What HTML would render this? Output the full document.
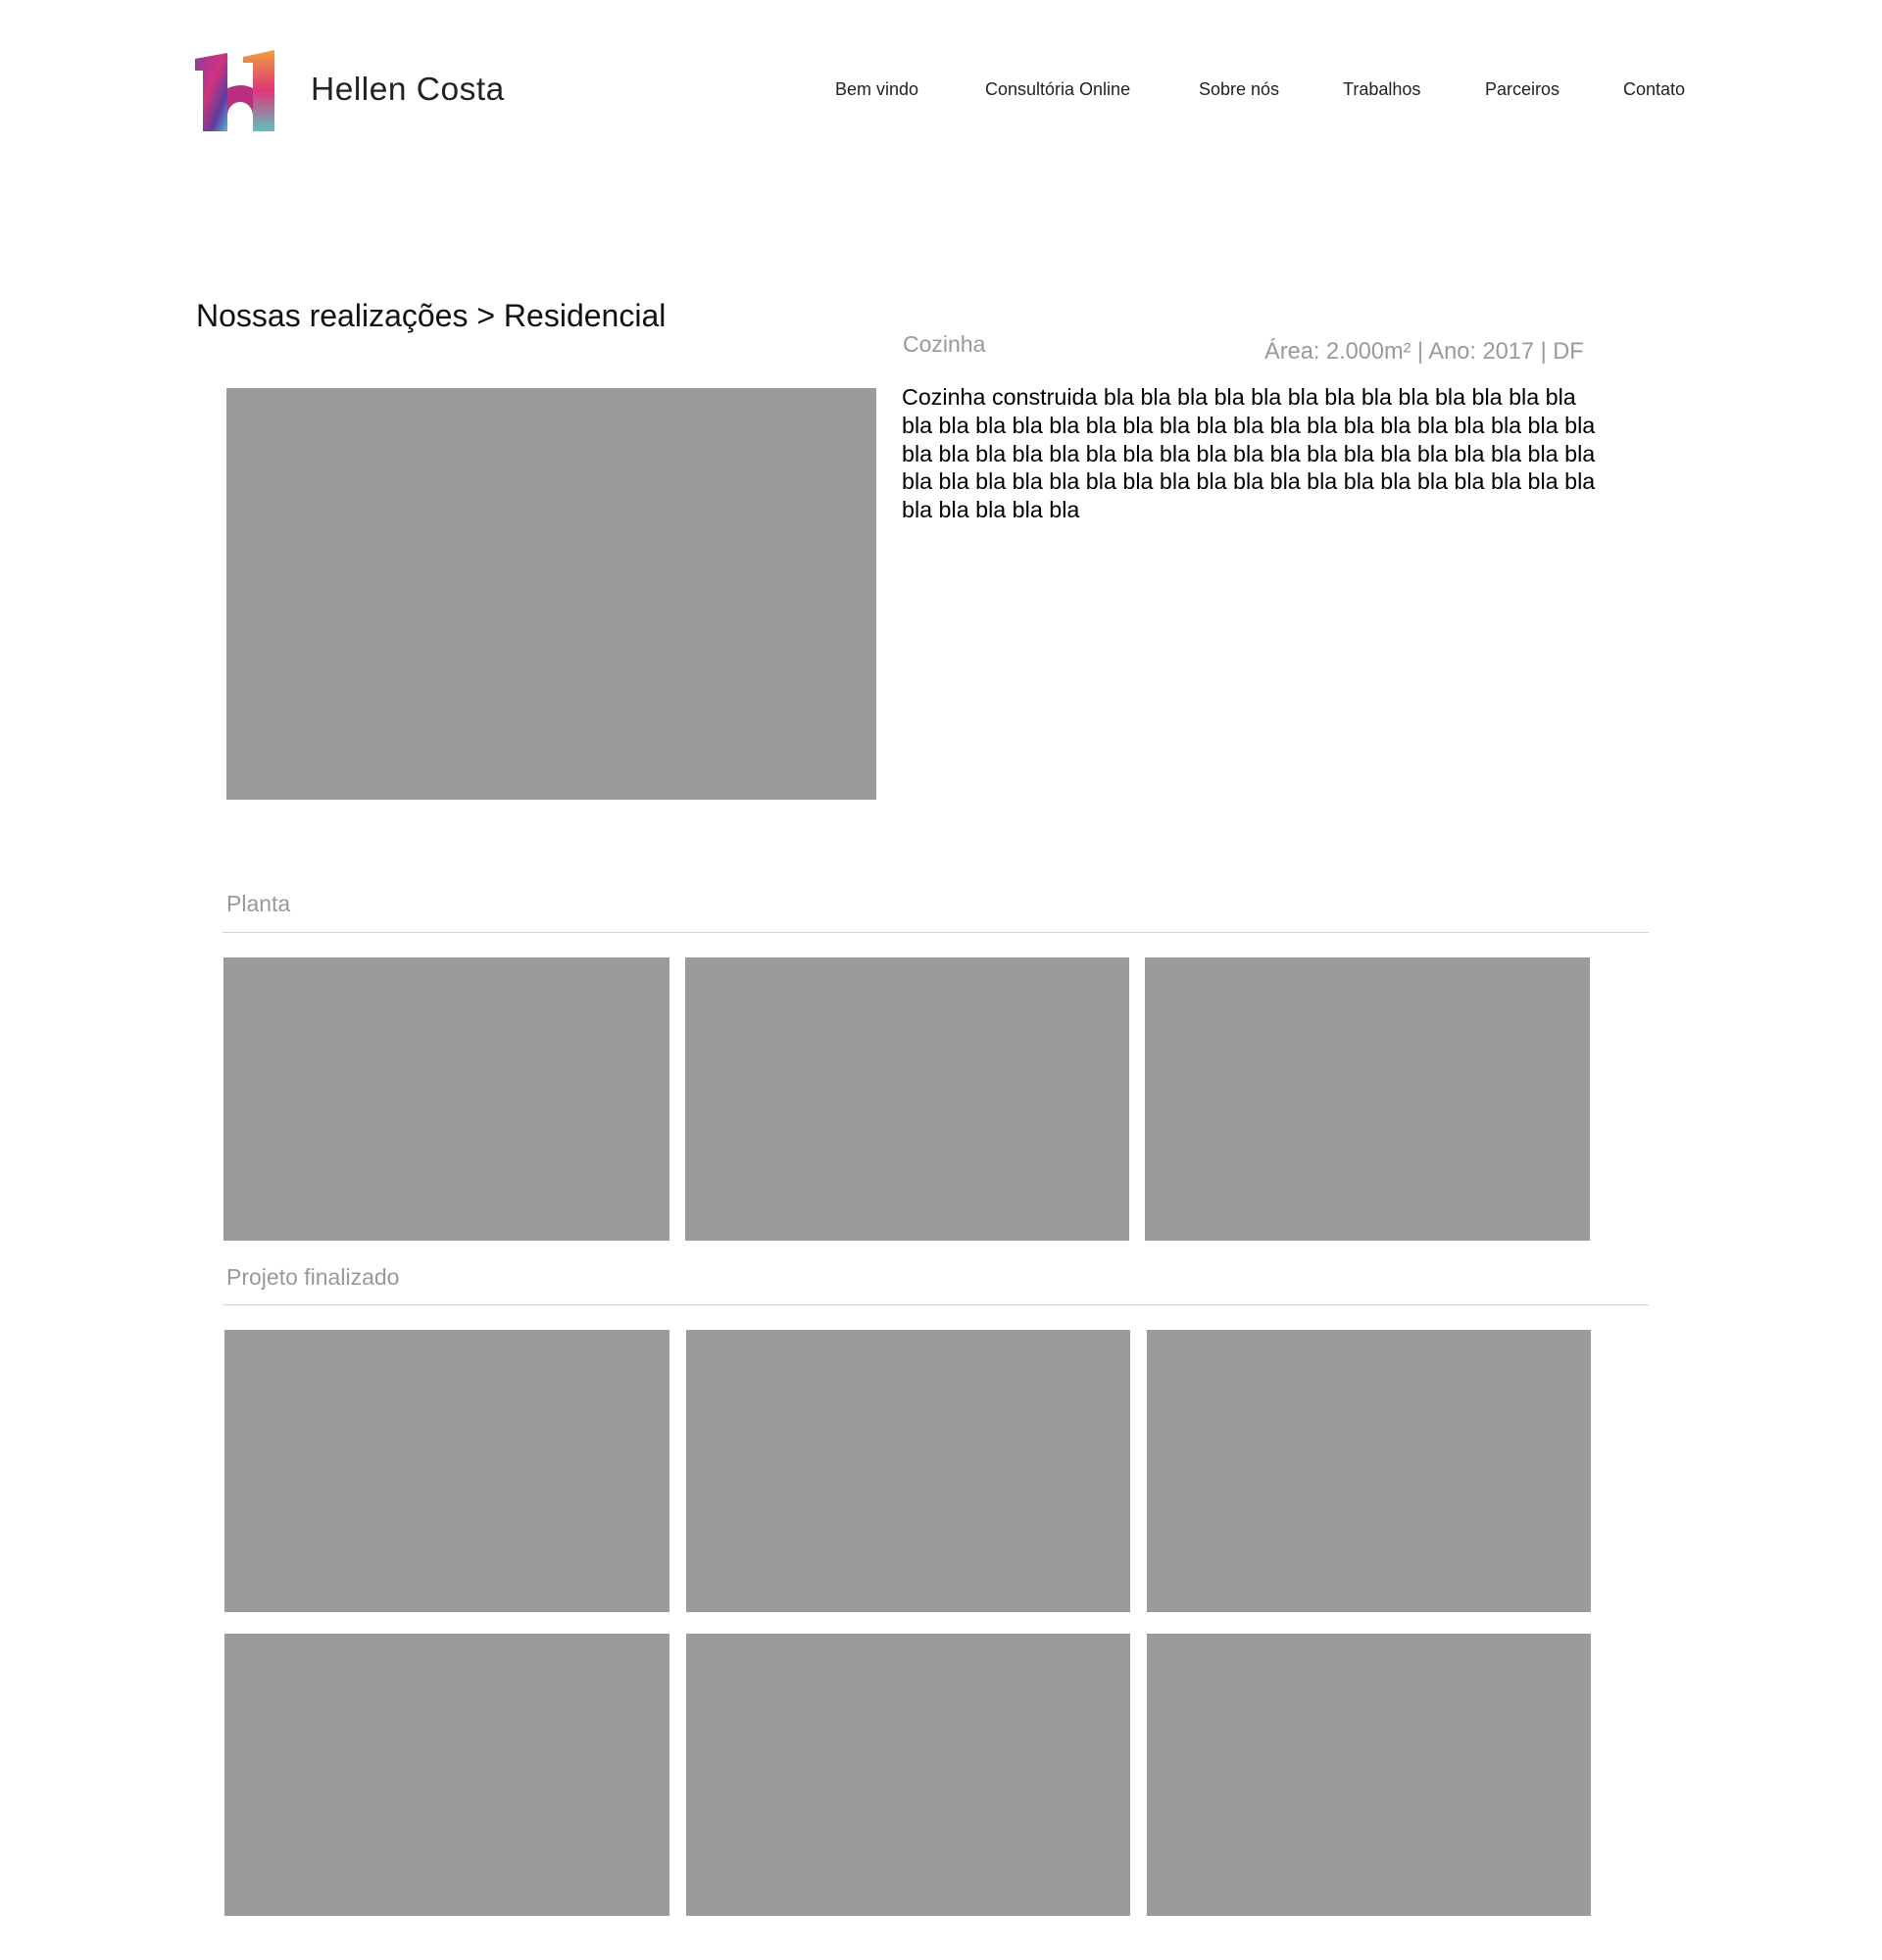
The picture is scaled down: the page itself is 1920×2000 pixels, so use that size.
<!DOCTYPE html>
<html><head><meta charset="utf-8"><style>
*{margin:0;padding:0;box-sizing:border-box}
body{width:1920px;height:2000px;background:#fff;position:relative;font-family:"Liberation Sans",Arial,sans-serif;overflow:hidden}
.a{position:absolute}
.nav{top:81px;font-size:18px;color:#222;white-space:nowrap}
.g{background:#9b9b9b;position:absolute}
.line{position:absolute;height:1px;background:#d5d5d5;left:227px;width:1455px}
</style></head><body>
<svg class="a" style="left:0;top:0" width="300" height="150">
<defs>
<linearGradient id="lg" x1="0" y1="0" x2="1" y2="1">
<stop offset="0" stop-color="#8a3aa0"/><stop offset="0.45" stop-color="#d2337e"/><stop offset="0.75" stop-color="#5a3ea0"/><stop offset="1" stop-color="#55b7d0"/>
</linearGradient>
<linearGradient id="lg2" x1="0" y1="0" x2="0" y2="1">
<stop offset="0" stop-color="#f0a03a"/><stop offset="0.5" stop-color="#e0357a"/><stop offset="1" stop-color="#5fc0c0"/>
</linearGradient>
</defs>
<path d="M199,60 L232,54 L232,134 L207,134 L207,72 L199,72 Z" fill="url(#lg)"/>
<path d="M248,58 L280,51 L280,134 L258,134 L258,64 L248,64 Z" fill="url(#lg2)"/>
<path d="M232,90 Q246,84 258,90 L258,134 L258,118 A13,14 0 0 0 232,118 Z" fill="#b8307f"/>
</svg>
<div class="a" style="left:317px;top:73px;font-size:33.5px;color:#222;letter-spacing:0.5px">Hellen Costa</div>
<div class="a nav" style="left:852px">Bem vindo</div>
<div class="a nav" style="left:1005px">Consultória Online</div>
<div class="a nav" style="left:1223px">Sobre nós</div>
<div class="a nav" style="left:1370px">Trabalhos</div>
<div class="a nav" style="left:1515px">Parceiros</div>
<div class="a nav" style="left:1656px">Contato</div>

<div class="a" style="left:200px;top:304px;font-size:32px;color:#111">Nossas realizações &gt; Residencial</div>
<div class="a" style="left:921px;top:338px;font-size:23px;color:#999">Cozinha</div>
<div class="a" style="left:1290px;top:346px;font-size:23.6px;color:#999;white-space:nowrap">Área: 2.000m² | Ano: 2017 | DF</div>
<div class="a" style="left:920px;top:391px;font-size:23.3px;line-height:28.8px;color:#000;white-space:nowrap">Cozinha construida bla bla bla bla bla bla bla bla bla bla bla bla bla<br>bla bla bla bla bla bla bla bla bla bla bla bla bla bla bla bla bla bla bla<br>bla bla bla bla bla bla bla bla bla bla bla bla bla bla bla bla bla bla bla<br>bla bla bla bla bla bla bla bla bla bla bla bla bla bla bla bla bla bla bla<br>bla bla bla bla bla</div>

<div class="g" style="left:231px;top:396px;width:663px;height:420px"></div>

<div class="a" style="left:231px;top:909px;font-size:23px;color:#999">Planta</div>
<div class="line" style="top:951px"></div>
<div class="g" style="left:228px;top:977px;width:455px;height:289px"></div>
<div class="g" style="left:699px;top:977px;width:453px;height:289px"></div>
<div class="g" style="left:1168px;top:977px;width:454px;height:289px"></div>

<div class="a" style="left:231px;top:1290px;font-size:23px;color:#999">Projeto finalizado</div>
<div class="line" style="top:1331px"></div>
<div class="g" style="left:229px;top:1357px;width:454px;height:288px"></div>
<div class="g" style="left:700px;top:1357px;width:453px;height:288px"></div>
<div class="g" style="left:1170px;top:1357px;width:453px;height:288px"></div>
<div class="g" style="left:229px;top:1667px;width:454px;height:288px"></div>
<div class="g" style="left:700px;top:1667px;width:453px;height:288px"></div>
<div class="g" style="left:1170px;top:1667px;width:453px;height:288px"></div>
</body></html>
